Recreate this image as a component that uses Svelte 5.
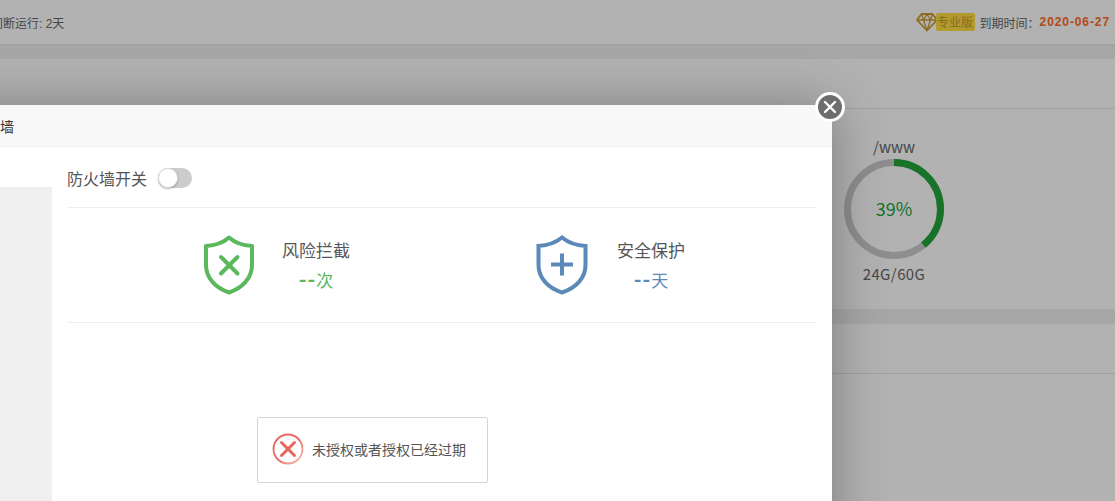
<script>
	const percent = 39;
	const radius = 46.5;
	const circumference = 2 * Math.PI * radius;
	const usedLength = (circumference * percent) / 100;
</script>

<div class="page">
	<header class="topbar">
		<span class="uptime">持续不间断运行: 2天</span>
		<div class="license">
			<svg class="gem" viewBox="0 0 22 20" width="22" height="20" fill="none" stroke="#c99a2c" stroke-width="1.800" stroke-linejoin="round">
				<path d="M5.500 2h11l4.500 6-10 10.500L1 8z" />
				<path d="M1 8h20M7.500 8 11 18.500 14.500 8M5.500 2l2 6L11 2l3.500 6 2-6" stroke-width="1.300" />
			</svg>
			<span class="badge">专业版</span>
			<span class="expiry">到期时间：</span>
			<strong class="date">2020-06-27</strong>
		</div>
	</header>

	<section class="card disk-card">
		<div class="card-head"></div>
		<div class="disk-list">
			<div class="disk">
				<span class="disk-path">/www</span>
				<div class="ring">
					<svg viewBox="0 0 100 100" width="100" height="100">
						<circle cx="50" cy="50" r={radius} fill="none" stroke="#cccccc" stroke-width="7" />
						<circle
							cx="50"
							cy="50"
							r={radius}
							fill="none"
							stroke="#20a53a"
							stroke-width="7"
							stroke-dasharray="{usedLength} {circumference}"
							transform="rotate(-90 50 50)"
						/>
					</svg>
					<span class="ring-value">{percent}%</span>
				</div>
				<span class="disk-size">24G/60G</span>
			</div>
		</div>
	</section>

	<section class="card lower-card">
		<div class="card-head"></div>
	</section>

	<div class="shade"></div>

	<div class="modal">
		<div class="modal-title">防火墙</div>
		<button class="modal-close" aria-label="关闭">
			<svg viewBox="0 0 14 14" width="14" height="14" stroke="#fff" stroke-width="2.400" stroke-linecap="round">
				<path d="M2 2l10 10M12 2 2 12" />
			</svg>
		</button>
		<div class="modal-body">
			<aside class="side"></aside>
			<div class="main">
				<div class="switch-row">
					<span class="switch-label">防火墙开关</span>
					<span class="switch"><span class="knob"></span></span>
				</div>
				<div class="stats">
					<div class="stat stat-risk">
						<svg viewBox="0 0 52 60" width="52" height="60" fill="none" stroke="#5cb85c" stroke-width="4" stroke-linejoin="round" stroke-linecap="round">
							<path d="M26 2.500C20.500 7.500 11 10.500 3 11v19c0 13.500 10 23 23 27.500C39 53 49 43.500 49 30V11C41 10.500 31.500 7.500 26 2.500z" />
							<path d="M18 22l16.500 16.500M34.500 22 18 38.500" />
						</svg>
						<div class="stat-text">
							<span class="stat-name">风险拦截</span>
							<span class="stat-value"><span class="dashes">--</span>次</span>
						</div>
					</div>
					<div class="stat stat-guard">
						<svg viewBox="0 0 52 60" width="52" height="60" fill="none" stroke="#5b8ab8" stroke-width="4" stroke-linejoin="miter">
							<path d="M26 2.500C20.500 7 11 10.500 2.500 11v19c0 13.500 10 23 23.500 27.500C39.500 53 49.500 43.500 49.500 30V11C41 10.500 31.500 7 26 2.500z" />
							<path d="M15 29.500h22M26 18.500v22" />
						</svg>
						<div class="stat-text">
							<span class="stat-name">安全保护</span>
							<span class="stat-value"><span class="dashes">--</span>天</span>
						</div>
					</div>
				</div>
			</div>
		</div>
		<div class="toast">
			<svg viewBox="0 0 32 32" width="32" height="32" fill="none">
				<defs>
					<linearGradient id="toast-ring" x1="0" y1="0" x2="1" y2="1">
						<stop offset="0.5" stop-color="#e8675a" />
						<stop offset="1" stop-color="#f6c4bd" />
					</linearGradient>
				</defs>
				<circle cx="16" cy="16" r="14.500" stroke="url(#toast-ring)" stroke-width="1.800" />
				<path d="M9.500 9.500l13 13M22.500 9.500l-13 13" stroke="#e8675a" stroke-width="3" stroke-linecap="round" />
			</svg>
			<span>未授权或者授权已经过期</span>
		</div>
	</div>
</div>

<style>
	:global(body) {
		margin: 0;
		background: #f0f0f0;
	}

	.page {
		position: relative;
		width: 1115px;
		height: 501px;
		overflow: hidden;
		font-family: "Noto Sans CJK SC", "Open Sans", sans-serif;
		font-size: 12px;
		color: #666;
	}

	.topbar {
		box-sizing: border-box;
		height: 45px;
		padding: 0 5px 0 0;
		background: #fff;
		border-bottom: 1px solid #e6e6e6;
		display: flex;
		justify-content: space-between;
		align-items: center;
	}

	.uptime {
		margin-left: -45px;
		font-family: "Liberation Sans", "Noto Sans CJK SC", sans-serif;
	}

	.license {
		display: flex;
		align-items: center;
	}

	.gem {
		margin-right: -2px;
	}

	.badge {
		width: 39px;
		text-align: center;
		line-height: 18px;
		background: #ffdd44;
		color: #c49a2c;
		border-radius: 2px;
	}

	.expiry {
		margin-left: 5px;
	}

	.date {
		color: #ff6a26;
		font-family: "Liberation Sans", sans-serif;
		letter-spacing: 0.9px;
	}

	.card {
		background: #fff;
	}

	.card-head {
		height: 49px;
		border-bottom: 1px solid #e6e6e6;
	}

	.disk-card {
		margin-top: 14px;
	}

	.disk-list {
		height: 200px;
		display: flex;
		justify-content: flex-end;
		padding-right: 171px;
	}

	.disk {
		width: 100px;
		display: flex;
		flex-direction: column;
		align-items: center;
		padding-top: 26px;
	}

	.disk-path {
		font-size: 15px;
		line-height: 24px;
	}

	.ring {
		position: relative;
		height: 100px;
	}

	.ring svg {
		display: block;
	}

	.ring-value {
		position: absolute;
		inset: -2px 0 0;
		display: flex;
		align-items: center;
		justify-content: center;
		font-size: 18px;
		color: #20a53a;
	}

	.disk-size {
		font-size: 15px;
		letter-spacing: 0.4px;
		line-height: 30px;
	}

	.lower-card {
		margin-top: 15px;
		height: 180px;
	}

	.shade {
		position: absolute;
		inset: 0;
		background: rgba(0, 0, 0, 0.3);
	}

	.modal {
		position: absolute;
		left: -48px;
		top: 105px;
		width: 880px;
		height: 500px;
		background: #fff;
		box-shadow: 1px 1px 50px rgba(0, 0, 0, 0.3);
	}

	.modal-title {
		box-sizing: border-box;
		height: 42px;
		padding-left: 20px;
		background: #f8f8f8;
		border-bottom: 1px solid #eee;
		font-size: 14px;
		line-height: 42px;
		color: #333;
	}

	.modal-close {
		position: absolute;
		right: -13px;
		top: -13px;
		box-sizing: border-box;
		width: 30px;
		height: 30px;
		padding: 0;
		border: 3px solid #fff;
		border-radius: 50%;
		background: #6e6e6e;
		display: flex;
		align-items: center;
		justify-content: center;
	}

	.modal-body {
		display: flex;
	}

	.side {
		width: 100px;
		height: 400px;
		margin-top: 40px;
		background: #f0f0f0;
	}

	.main {
		flex: 1;
		padding: 0 15px;
	}

	.switch-row {
		box-sizing: border-box;
		height: 61px;
		padding-top: 2px;
		border-bottom: 1px solid #eee;
		display: flex;
		align-items: center;
		gap: 11px;
	}

	.switch-label {
		font-size: 16px;
		color: #555;
	}

	.switch {
		position: relative;
		width: 34px;
		height: 20px;
		border-radius: 10px;
		background: #ccc;
	}

	.knob {
		position: absolute;
		left: 0;
		top: 0;
		box-sizing: border-box;
		width: 20px;
		height: 20px;
		border-radius: 50%;
		background: #fff;
		border: 1px solid #ddd;
		box-shadow: 0 1px 2px rgba(0, 0, 0, 0.3);
	}

	.stats {
		height: 114px;
		padding-left: 136px;
		border-bottom: 1px solid #eee;
		display: flex;
		align-items: center;
		gap: 186px;
	}

	.stat {
		display: flex;
		align-items: center;
		gap: 27px;
	}

	.stat-guard {
		gap: 29px;
	}

	.stat-text {
		display: flex;
		flex-direction: column;
		align-items: center;
		gap: 6px;
		padding-bottom: 1px;
	}

	.stat-name {
		font-size: 17px;
		line-height: 24px;
		color: #555;
	}

	.stat-value {
		font-size: 17px;
		line-height: 24px;
	}

	.dashes {
		font-size: 21px;
		font-weight: 700;
		line-height: 1;
		letter-spacing: 1px;
	}

	.stat-risk .stat-value {
		color: #5cb85c;
	}

	.stat-guard .stat-value {
		color: #5b8ab8;
	}

	.toast {
		position: absolute;
		left: 305px;
		top: 312px;
		box-sizing: border-box;
		width: 231px;
		height: 66px;
		padding: 0 0 2px 14px;
		background: #fff;
		border: 1px solid #d4d4d4;
		border-radius: 2px;
		display: flex;
		align-items: center;
		gap: 8px;
		font-size: 14px;
		color: #555;
	}
</style>
